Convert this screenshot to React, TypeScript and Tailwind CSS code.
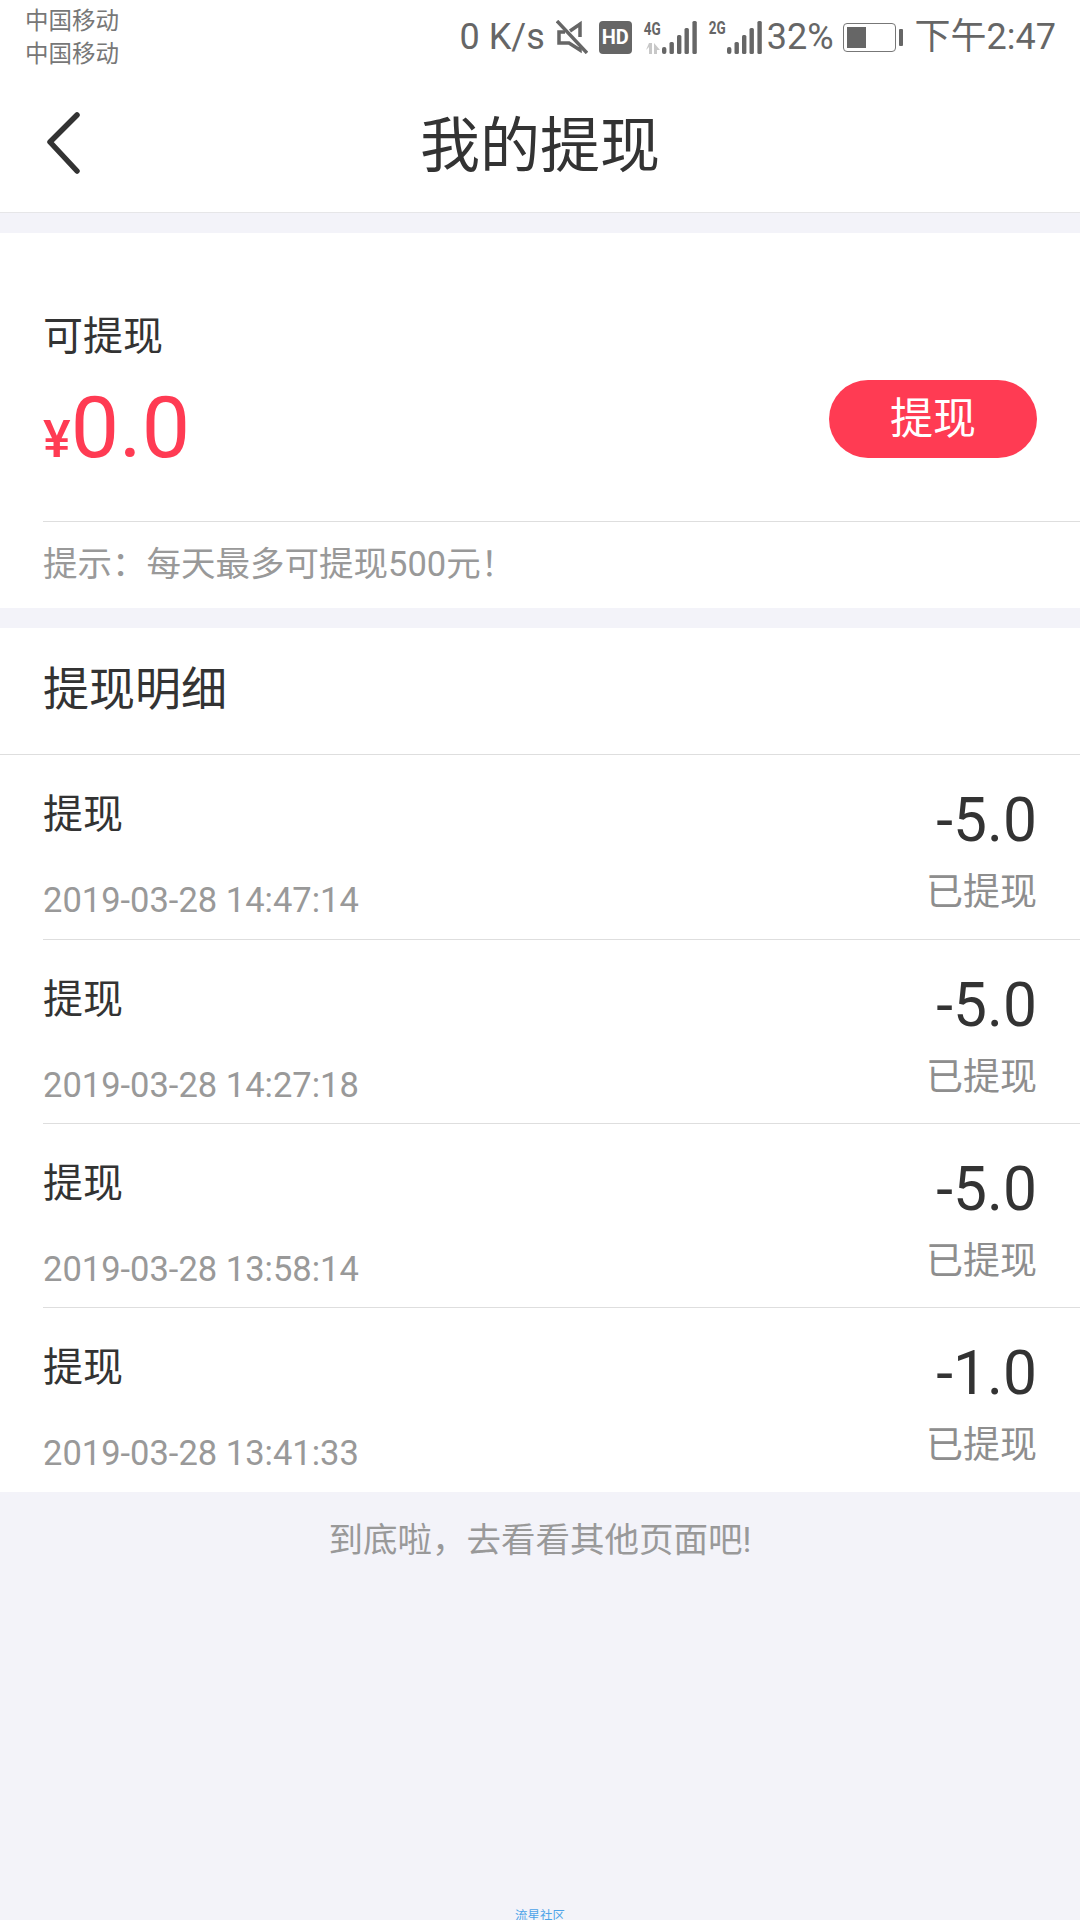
import React from "react";

const font = { fontFamily: 'Roboto, "Noto Sans CJK SC", sans-serif' };

function Bars() {
  return (
    <svg width="35" height="33" viewBox="0 0 35 33">
      <g fill="#666">
        <rect x="0" y="26" width="4.4" height="7" rx="2" />
        <rect x="7.5" y="21" width="4.4" height="12" rx="1.5" />
        <rect x="15" y="14" width="4.4" height="19" rx="1.5" />
        <rect x="22.5" y="7" width="4.4" height="26" rx="1.5" />
        <rect x="30.4" y="0" width="4.4" height="33" rx="1.5" />
      </g>
    </svg>
  );
}

function StatusBar() {
  return (
    <div className="flex h-[70px] items-start justify-between pl-[25px] pr-[24px] text-[#666]">
      <div className="pt-[5px] text-[23.5px] leading-[33px] text-[#777]">
        <div>中国移动</div>
        <div>中国移动</div>
      </div>
      <div className="flex h-[70px] items-center pt-[4px]">
        <span className="text-[36px] leading-[40px]">0 K/s</span>
        <svg width="32" height="34" viewBox="0 0 32 34" className="ml-[11px]" fill="none" stroke="#666" strokeWidth="3.5">
          <path d="M14 11 L24 4 V17 M24 27 V30 L13 23 H3 V12 H9" />
          <path d="M1 1 L31 33" />
        </svg>
        <div className="ml-[11px] flex h-[33px] w-[33px] items-center justify-center rounded-[4px] bg-[#666] text-[20px] font-bold leading-none text-white">
          HD
        </div>
        <div className="ml-[12px] flex h-[33px] w-[53px] items-start">
          <div className="flex w-[18px] flex-col items-center">
            <span className="scale-x-75 text-[18px] font-bold leading-[16px]">4G</span>
            <svg width="16" height="11" viewBox="0 0 16 11" fill="#c8c8c8" className="mt-[6px]">
              <path d="M4 0h3v11H4V4L1 7zM9 11V0l6 7h-3v4z" />
            </svg>
          </div>
          <Bars />
        </div>
        <div className="ml-[12px] flex h-[33px] w-[53px] items-start">
          <div className="flex w-[18px] flex-col items-center">
            <span className="scale-x-75 text-[18px] font-bold leading-[14px]">2G</span>
          </div>
          <Bars />
        </div>
        <span className="ml-[5px] text-[36px] leading-[40px]">32%</span>
        <div className="ml-[9px] flex items-center">
          <div className="h-[29px] w-[53px] rounded-[4px] border border-[#777] p-[3px]">
            <div className="h-full w-[19px] bg-[#666]" />
          </div>
          <div className="ml-[3px] h-[17px] w-[4px] rounded-[1px] bg-[#666]" />
        </div>
        <span className="ml-[12px] text-[36px] leading-[40px]">下午2:47</span>
      </div>
    </div>
  );
}

function NavBar() {
  return (
    <div className="grid h-[143px] grid-cols-[1fr_auto_1fr] items-start border-b border-[#e6e6e8] bg-white">
      <div className="pl-[46px] pt-[42px]">
        <svg width="36" height="62" viewBox="0 0 36 62" fill="none" stroke="#333" strokeWidth="5.5" strokeLinecap="round" strokeLinejoin="round">
          <path d="M31 3 L4 30 L31 59" />
        </svg>
      </div>
      <div className="pt-[39px] text-[60px] leading-[76px] text-[#333]">我的提现</div>
      <div />
    </div>
  );
}

function Balance() {
  return (
    <div className="mt-[20px] bg-white pl-[43px]">
      <div className="flex h-[289px] items-start justify-between border-b border-[#dedede] pr-[43px]">
        <div className="pt-[74px]">
          <div className="text-[40px] leading-[60px] text-[#333]">可提现</div>
          <div className="mt-[11px] flex items-baseline leading-[100px] text-[#ff3b53]">
            <span className="text-[52px] font-medium">¥</span>
            <span className="text-[86px]">0.0</span>
          </div>
        </div>
        <button className="mt-[147px] h-[78px] w-[208px] rounded-full bg-[#ff3b53] text-[43px] leading-[78px] text-white">
          提现
        </button>
      </div>
      <div className="h-[86px] text-[34.5px] leading-[84px] text-[#999]">提示：每天最多可提现500元！</div>
    </div>
  );
}

const records = [
  { time: "2019-03-28 14:47:14", amount: "-5.0" },
  { time: "2019-03-28 14:27:18", amount: "-5.0" },
  { time: "2019-03-28 13:58:14", amount: "-5.0" },
  { time: "2019-03-28 13:41:33", amount: "-1.0" },
];

function Records() {
  return (
    <div className="mt-[20px] bg-white">
      <div className="h-[127px] border-b border-[#dedede] pl-[43px] text-[46px] leading-[122px] text-[#333]">提现明细</div>
      <div className="pl-[43px]">
        {records.map((r, i) => (
          <div
            key={r.time}
            className={
              i === 0
                ? "flex h-[185px] justify-between border-b border-[#dedede] pr-[43px]"
                : i < records.length - 1
                  ? "flex h-[184px] justify-between border-b border-[#dedede] pr-[43px]"
                  : "flex h-[184px] justify-between pr-[43px]"
            }
          >
            <div className="pt-[30px]">
              <div className="text-[40px] leading-[60px] text-[#333]">提现</div>
              <div className="mt-[30px] text-[34.5px] leading-[50px] text-[#999]">{r.time}</div>
            </div>
            <div className="flex flex-col items-end pt-[31px]">
              <div className="text-[60.5px] leading-[70px] text-[#333]">{r.amount}</div>
              <div className="mt-[12px] text-[37px] leading-[50px] text-[#8e8e8e]">已提现</div>
            </div>
          </div>
        ))}
      </div>
    </div>
  );
}

export default function App() {
  return (
    <div className="flex h-[1920px] w-[1080px] flex-col overflow-hidden bg-[#f3f3f9]" style={font}>
      <div className="bg-white">
        <StatusBar />
      </div>
      <NavBar />
      <Balance />
      <Records />
      <div className="pt-[23px] text-center text-[34.5px] leading-[50px] text-[#999]">到底啦，去看看其他页面吧!</div>
      <div className="mt-auto -mb-[3px] text-center text-[12.5px] leading-[14px] text-[#4ea3e8]">流星社区</div>
    </div>
  );
}
